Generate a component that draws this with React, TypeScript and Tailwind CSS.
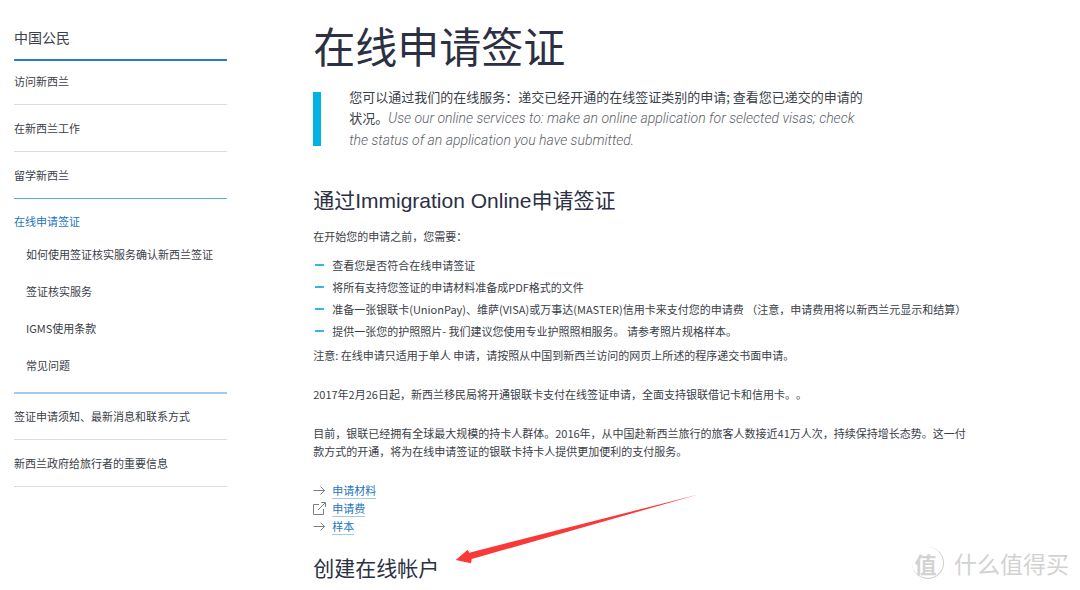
const bodyFont = "font-['Noto_Sans_CJK_SC',sans-serif]";
const headingFont = "font-['Liberation_Sans','Noto_Sans_CJK_SC',sans-serif]";

const subItems = [
  "如何使用签证核实服务确认新西兰签证",
  "签证核实服务",
  "IGMS使用条款",
  "常见问题",
];

const requirements = [
  "查看您是否符合在线申请签证",
  "将所有支持您签证的申请材料准备成PDF格式的文件",
  "准备一张银联卡(UnionPay)、维萨(VISA)或万事达(MASTER)信用卡来支付您的申请费 （注意，申请费用将以新西兰元显示和结算）",
  "提供一张您的护照照片- 我们建议您使用专业护照照相服务。 请参考照片规格样本。",
];

function ArrowIcon() {
  return (
    <svg width="13" height="11" viewBox="0 0 13 11" fill="none" stroke="#7b8085" aria-hidden="true">
      <path d="M0.5 5.5H11.5M7.5 1.5L11.5 5.5L7.5 9.5" />
    </svg>
  );
}

function ExternalIcon() {
  return (
    <svg width="13" height="13" viewBox="0 0 13 13" fill="none" stroke="#7b8085" aria-hidden="true">
      <path d="M6 2.5H0.5V12.5H10.5V7M5 8L12 1M8 0.5H12.5V5" />
    </svg>
  );
}

function SideNav() {
  return (
    <nav className="w-1/5 shrink-0 text-[11px] leading-[18px] text-[#3a4048]">
      <h2 className="border-b-2 border-[#2482c4] pt-[27px] pb-3 text-sm leading-5">中国公民</h2>
      <ul>
        <li className="border-b border-[#dcdcdc] pt-[11px] pb-[14px]">
          <a href="#visit">访问新西兰</a>
        </li>
        <li className="border-b border-[#dcdcdc] py-[14px]">
          <a href="#work">在新西兰工作</a>
        </li>
        <li className="border-b border-[#5aaae0] py-[14px]">
          <a href="#study">留学新西兰</a>
        </li>
        <li className="border-b-2 border-[#9fcbe9] pt-[13px] pb-2">
          <a href="#apply" className="block text-[#1f75bb]">在线申请签证</a>
          <ul className="mt-[6px] pl-3 leading-[37px]">
            {subItems.map((item) => (
              <li key={item}>
                <a href="#sub" className="whitespace-nowrap">{item}</a>
              </li>
            ))}
          </ul>
        </li>
        <li className="border-b border-[#dcdcdc] pt-[13px] pb-[14px]">
          <a href="#contact">签证申请须知、最新消息和联系方式</a>
        </li>
        <li className="border-b border-[#dcdcdc] py-[14px]">
          <a href="#info">新西兰政府给旅行者的重要信息</a>
        </li>
      </ul>
    </nav>
  );
}

function Watermark() {
  return (
    <div className="absolute right-[11px] bottom-[11px] flex items-center gap-[10px] text-[#d2d2d2]" aria-hidden="true">
      <span className="flex size-8 items-center justify-center rounded-full border-r border-b border-[#cfcfcf] pr-1 text-[22px] leading-8 font-bold">
        值
      </span>
      <span className="text-[23px] leading-8">什么值得买</span>
    </div>
  );
}

export default function App() {
  return (
    <div className={`relative flex min-h-screen overflow-hidden bg-white pl-[14px] [text-spacing-trim:space-all] ${bodyFont}`}>
      <SideNav />

      <main className="min-w-0 flex-1 pt-6 pr-[104px] pl-[86px] text-[11px] leading-[18px] text-[#3a4048]">
        <h1 className={`text-[42px] leading-[50px] text-[#2b3043] ${headingFont}`}>在线申请签证</h1>

        <div className="mt-3 flex">
          <div className="mt-[6px] mb-[5px] w-2 shrink-0 bg-[#00b2e3]" />
          <p className="ml-7 max-w-[516px] text-[13px] leading-[21px]">
            您可以通过我们的在线服务：递交已经开通的在线签证类别的申请; 查看您已递交的申请的状况。
            <em className="font-['Roboto',sans-serif] text-[14px] font-light text-[#5c6167]">
              Use our online services to: make an online application for selected visas; check the status of an application you have submitted.
            </em>
          </p>
        </div>

        <h2 className={`mt-9 text-[21px] leading-7 text-[#2b3043] ${headingFont}`}>
          通过Immigration Online申请签证
        </h2>
        <p className="mt-3">在开始您的申请之前，您需要：</p>

        <ul className="mt-[9px] leading-[22px]">
          {requirements.map((item) => (
            <li key={item} className="flex">
              <span className="mt-[10px] mr-2 ml-[2px] h-[2px] w-[9px] shrink-0 bg-[#33b6e6]" />
              {item}
            </li>
          ))}
        </ul>
        <p className="mt-1">
          注意: 在线申请只适用于单人 申请，请按照从中国到新西兰访问的网页上所述的程序递交书面申请。
        </p>
        <p className="mt-[21px]">
          2017年2月26日起，新西兰移民局将开通银联卡支付在线签证申请，全面支持银联借记卡和信用卡。。
        </p>
        <p className="mt-[21px]">
          目前，银联已经拥有全球最大规模的持卡人群体。2016年，从中国赴新西兰旅行的旅客人数接近41万人次，持续保持增长态势。这一付款方式的开通，将为在线申请签证的银联卡持卡人提供更加便利的支付服务。
        </p>

        <ul className="mt-[21px] text-[#1f75bb]">
          <li className="flex h-[18px] items-center gap-[6px]">
            <ArrowIcon />
            <a href="#materials" className="border-b border-[#a5c8e4] leading-4">申请材料</a>
          </li>
          <li className="flex h-[18px] items-center gap-[6px]">
            <ExternalIcon />
            <a href="#fees" className="border-b border-[#a5c8e4] leading-4">申请费</a>
          </li>
          <li className="flex h-[18px] items-center gap-[6px]">
            <ArrowIcon />
            <a href="#sample" className="border-b border-[#a5c8e4] leading-4">样本</a>
          </li>
        </ul>

        <h2 className={`mt-5 text-[21px] leading-7 text-[#2b3043] ${headingFont}`}>创建在线帐户</h2>
      </main>

      <svg className="absolute top-[490px] left-[450px]" width="252" height="78" viewBox="450 490 252 78" aria-hidden="true">
        <path d="M455.7 560L467.7 549.8L469.3 552.7L698.3 494.5L471.7 559L471 563.2Z" fill="#fb3838" />
      </svg>
      <Watermark />
    </div>
  );
}
